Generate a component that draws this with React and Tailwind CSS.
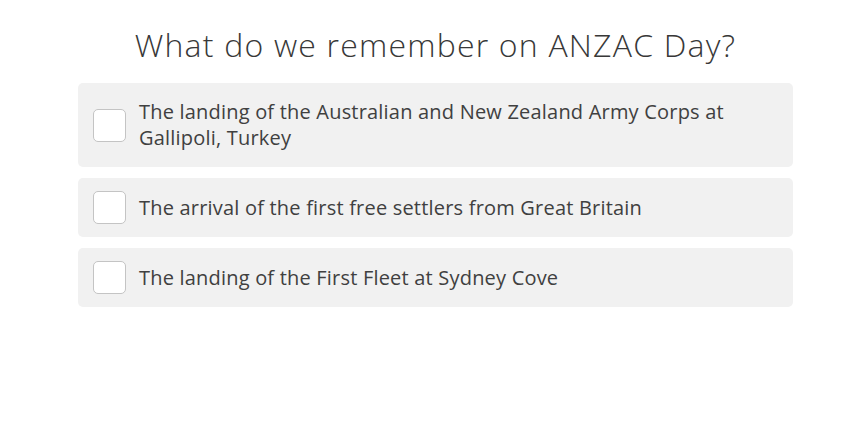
import React, { useState } from 'react';

const options = [
    { id: 'a', text: 'The landing of the Australian and New Zealand Army Corps at Gallipoli, Turkey' },
    { id: 'b', text: 'The arrival of the first free settlers from Great Britain' },
    { id: 'c', text: 'The landing of the First Fleet at Sydney Cove' },
];

const App = () => {
    const [checked, setChecked] = useState({});

    const toggle = id => setChecked(prev => ({ ...prev, [id]: !prev[id] }));

    return (
        <div className="min-h-[423px] w-[866px] bg-white font-['Open_Sans',sans-serif]">
            <div className="ml-[78px] w-[715px] pt-[24px]">
                <h1 className="text-center text-[32px] leading-[42px] font-light tracking-[1.2px] text-[#383838]">
                    What do we remember on ANZAC Day?
                </h1>

                <div className="mt-[17px] flex flex-col gap-[11px]">
                    {options.map(opt => (
                        <label
                            key={opt.id}
                            className="flex items-center gap-[13px] rounded-[5px] bg-[#f1f1f1] pl-[15px] pr-[40px] py-[13px] cursor-pointer"
                        >
                            <span
                                onClick={() => toggle(opt.id)}
                                className="flex h-[33px] w-[33px] shrink-0 items-center justify-center rounded-[5px] border border-[#c4c4c4] bg-white"
                            >
                                {checked[opt.id] && <span className="text-[#444] text-lg">✓</span>}
                            </span>
                            <span className="py-[3px] text-[20px] leading-[26px] tracking-[0.2px] text-[#404040]">{opt.text}</span>
                        </label>
                    ))}
                </div>
            </div>
        </div>
    );
};

export default App;
